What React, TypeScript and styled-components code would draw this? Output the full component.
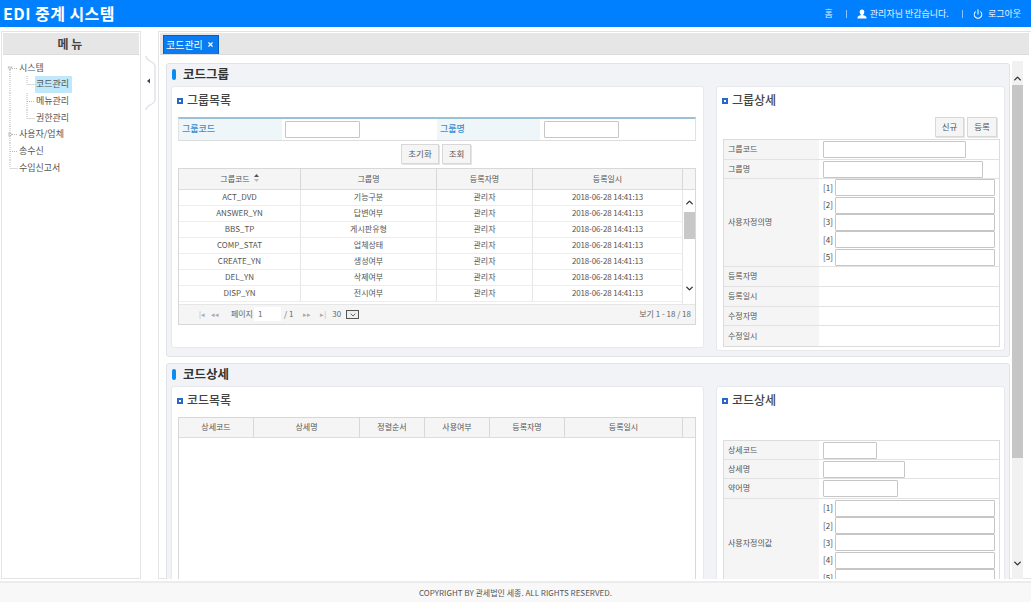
import React from 'react';
import styled, { createGlobalStyle } from 'styled-components';
import { ChevronUp, ChevronDown, Power, X } from 'lucide-react';

const Global = createGlobalStyle`
  html, body { margin: 0; padding: 0; background: #fff; }
  body { font-family: "Noto Sans CJK KR", "Liberation Sans", sans-serif; font-size: 9px; color: #444; }
  * { box-sizing: border-box; }
`;

const Page = styled.div`width: 1031px; height: 602px; display: flex; flex-direction: column; overflow: hidden; background: #fff;`;
const Header = styled.header`height: 27px; flex: none; background: #0080ff; color: #fff; display: flex; align-items: center; justify-content: space-between; padding: 0 10px 0 3px;`;
const Logo = styled.h1`margin: 0; font-size: 16px; font-weight: 700; letter-spacing: 0.45px; line-height: 27px;`;
const TopNav = styled.nav`display: flex; align-items: center; font-size: 9px; color: #e4f1ff;`;
const NavItem = styled.span`display: flex; align-items: center; gap: ${p => p.$gap || 0}px;`;
const NavSep = styled.span`width: 1px; height: 8px; background: #8cc4ff; margin: 0 ${p => p.$r}px 0 ${p => p.$l}px;`;
const Body = styled.div`flex: 1; min-height: 0; display: flex; padding: 4px 0 0 1px;`;
const Sidebar = styled.aside`width: 140px; flex: none; border: 1px solid #e4e4e4; padding: 1px;`;
const MenuTitle = styled.div`height: 22px; background: #e6e6e6; border-bottom: 1px solid #dcdcdc; text-align: center; font-size: 12px; font-weight: 700; line-height: 21px; color: #444; padding-right: 2px;`;
const Tree = styled.div`padding-top: 5px;`;
const TreeRow = styled.div`height: 16.67px; display: flex; align-items: center; font-size: 9px; color: #555;`;
const TreeLines = styled.svg`width: ${p => p.$w}px; height: 17px; flex: none; display: block;`;
const TreeLabel = styled.span`height: 17px; line-height: 16px; padding: 0 1px; background: ${p => p.$on ? '#bfe8fb' : 'transparent'}; border-radius: 1px; ${p => p.$on && 'width: 37px;'}`;
const Splitter = styled.div`width: 17px; flex: none; padding-top: 25px;`;
const Main = styled.main`flex: 1; min-width: 0; display: flex; flex-direction: column; border: 1px solid #e4e4e4; border-right: 0; padding: 1px 2px 0 1px;`;
const TabStrip = styled.div`height: 22px; flex: none; background: #e6e6e6; border-bottom: 1px solid #dcdcdc; padding: 2px 0 0 3px;`;
const Tab = styled.div`width: 56px; height: 19px; background: #0a7bf0; border: 1px solid #0660c4; border-bottom: 0; color: #fff; font-size: 10px; line-height: 15px; display: flex; align-items: center; justify-content: space-between; padding: 0 4px 2px 2px;`;
const ContentRow = styled.div`flex: 1; min-height: 0; display: flex; padding: 7px 0 0 6px;`;
const Sections = styled.div`width: 844px; flex: none; overflow: hidden; display: flex; flex-direction: column; gap: 6px; height: 516px; margin-top: 1px;`;
const Section = styled.section`flex: none; background: #f2f3f7; border: 1px solid #e2e3e8; border-radius: 3px; padding: 0 3px 0 4px; height: ${p => p.$h}px;`;
const SectionHead = styled.h2`margin: 0; height: 22px; padding: 0 0 3px 1px; display: flex; align-items: center; gap: 7px; font-size: 12.5px; font-weight: 700; color: #333;`;
const Pill = styled.i`width: 4px; height: 11px; border-radius: 2px; background: #0a8cf0; display: block; margin-top: 2px;`;
const Cards = styled.div`display: flex; gap: 12px;`;
const Card = styled.div`background: #fff; border: 1px solid #e8e9ec; border-radius: 3px; width: ${p => p.$w}px; height: ${p => p.$h}px; padding: 0 6px;`;
const CardHead = styled.h3`margin: 0; height: 28px; padding-bottom: 3px; display: flex; align-items: center; gap: 4px; font-size: 12px; font-weight: 500; color: #444;`;
const Square = styled.i`width: 6px; height: 6px; border: 2px solid #2868c8; display: block; margin: 2px 0 0 -1px;`;
const SearchBox = styled.div`width: 518px; height: 24px; margin-top: 2px; border-top: 2px solid #9cc1d6; border-bottom: 1px solid #ddd; border-left: 1px solid #e2e2e2; border-right: 1px solid #e2e2e2; display: flex; align-items: stretch;`;
const SearchLabel = styled.div`width: ${p => p.$w}px; background: #eff6fa; color: #3d8ccc; font-weight: 500; display: flex; align-items: center; padding: 0 0 2px 3px;`;
const SearchCell = styled.div`width: ${p => p.$w}px; display: flex; align-items: center; padding-left: ${p => p.$p}px;`;
const Field = styled.input`display: block; width: ${p => p.$w}px; height: 17px; border: 1px solid #c6c6c6; background: #fff; padding: 0; margin: 0; border-radius: 1px;`;
const ButtonRow = styled.div`display: flex; justify-content: ${p => p.$end ? 'flex-end' : 'flex-start'}; gap: 3px; margin-top: ${p => p.$mt}px; padding-left: ${p => p.$l || 0}px; padding-right: ${p => p.$r || 0}px;`;
const Btn = styled.button`width: ${p => p.$w}px; height: 20px; border: 1px solid #d8d8d8; background: #f5f5f5; color: #555; font: inherit; font-size: 8.5px; padding: 0 0 2px; box-shadow: 1px 1px 0 #e4e4e4;`;
const Grid = styled.div`width: 518px; border: 1px solid #d8d8d8; margin-top: ${p => p.$mt}px; height: ${p => p.$h}px; overflow: hidden; display: flex; flex-direction: column;`;
const GridHead = styled.div`height: ${p => p.$h}px; flex: none; display: flex; background: #f5f5f5; border-bottom: 1px solid #dcdcdc;`;
const HeadCell = styled.div`width: ${p => p.$w}px; flex: none; border-right: 1px solid #d8d8d8; display: flex; align-items: center; justify-content: center; gap: 4px; color: #555; font-size: 8px; padding-bottom: 2px; &:last-child { border-right: 0; flex: 1; }`;
const GridBody = styled.div`flex: 1; min-height: 0; display: flex; overflow: hidden;`;
const Rows = styled.div`flex: 1; min-width: 0; overflow: hidden;`;
const Row = styled.div`height: 16px; display: flex; border-bottom: 1px solid #ededed;`;
const Cell = styled.div`width: ${p => p.$w}px; flex: none; border-right: 1px solid #e6e6e6; text-align: center; line-height: 14px; color: #555; font-size: 8px; letter-spacing: ${p => p.$tight ? '-0.15px' : '0'};`;
const MiniScroll = styled.div`width: 13px; flex: none; border-left: 1px solid #e6e6e6; display: flex; flex-direction: column; align-items: center; padding-top: 7px; color: #333;`;
const MiniThumb = styled.div`width: 11px; height: 27px; background: #c8c8c8; margin-top: 4px;`;
const MiniSpacer = styled.div`flex: 1;`;
const MiniDown = styled.div`height: 21px; flex: none;`;
const Pager = styled.div`height: 20px; flex: none; background: #f5f5f5; border-top: 1px solid #e6e6e6; display: flex; align-items: center; padding: 0 4px 2px 20px; color: #666; font-size: 8px;`;
const PagerNav = styled.span`color: #aaa; font-size: 7px; margin: 0 ${p => p.$r}px 0 ${p => p.$l || 0}px;`;
const PagerLabel = styled.span`font-size: 8px; margin-left: 8px;`;
const PagerBox = styled.span`background: #fff; height: 14px; line-height: 14px; padding-left: 4px; width: 27px; margin: 0 3px 0 1px; display: block;`;
const PagerSelect = styled.span`width: 13px; height: 9px; border: 1px solid #555; background: #eee; display: flex; align-items: center; justify-content: center; margin: 2px 0 0 5px;`;
const PagerInfo = styled.span`margin-left: auto;`;
const DetailTable = styled.div`width: 277px; border: 1px solid #dcdcdc; margin-top: ${p => p.$mt}px;`;
const DetailRow = styled.div`display: flex; min-height: ${p => p.$h}px; border-bottom: 1px solid #e2e2e2; &:last-child { border-bottom: 0; }`;
const DetailLabel = styled.div`width: 95px; flex: none; background: #f5f5f5; display: flex; align-items: center; padding: 0 0 2px 4px; color: #555; font-size: 8px;`;
const DetailValue = styled.div`flex: 1; display: flex; flex-direction: column; justify-content: center; padding-left: 4px;`;
const IndexedField = styled.div`display: flex; align-items: center; height: 17.3px; gap: 2px; font-size: 8px; color: #444;`;
const IndexTag = styled.span`width: 10px; padding-bottom: 1px;`;
const PageScroll = styled.div`width: 11px; flex: none; margin: -1px 0 0 2px; height: 518px; background: #f1f1f1; display: flex; flex-direction: column; align-items: center; color: #333; padding-top: 12px;`;
const PageThumb = styled.div`width: 11px; height: 373px; background: #c6c6c6; margin-top: 1px;`;
const PageSpacer = styled.div`flex: 1;`;
const PageArrowDown = styled.div`height: 21px; flex: none;`;
const Footer = styled.footer`height: 21px; flex: none; margin-top: 2px; border-top: 2px solid #ececec; background: #f8f8f8; text-align: center; font-size: 8px; line-height: 20px; color: #555;`;

const groupCols = [122, 136, 96, 150];
const groupRows: [string, string][] = [
  ['ACT_DVD', '기능구분'], ['ANSWER_YN', '답변여부'], ['BBS_TP', '게시판유형'], ['COMP_STAT', '업체상태'],
  ['CREATE_YN', '생성여부'], ['DEL_YN', '삭제여부'], ['DISP_YN', '전시여부'],
];
const codeHead = [['상세코드', 75], ['상세명', 106], ['정렬순서', 65], ['사용여부', 65], ['등록자명', 75], ['등록일시', 118], ['', 0]] as const;

const Branch = ({ w, d, mark }: { w: number; d: string; mark?: string }) => (
  <TreeLines $w={w} viewBox={`0 0 ${w} 17`}>
    <path d={d} fill="none" stroke="#b9b9b9" strokeWidth="1" strokeDasharray="1 1" />
    {mark && <path d={mark} fill="#fff" stroke="#aaa" strokeWidth="0.8" />}
  </TreeLines>
);
const UserIcon = () => (
  <svg width="10" height="10" viewBox="0 0 10 10"><path fill="#fff" d="M5 0.5a2.3 2.6 0 0 1 2.3 2.6c0 1-.5 1.9-1.1 2.3v.8c1.5.4 3.3 1 3.3 2.2v1H.5v-1c0-1.2 1.8-1.8 3.3-2.2v-.8C3.2 5 2.7 4.1 2.7 3.1A2.3 2.6 0 0 1 5 .5z" /></svg>
);
const SortIcon = () => (
  <svg width="5" height="8" viewBox="0 0 5 8"><path d="M2.5 0L5 3H0z" fill="#555" /><path d="M2.5 8L0 5h5z" fill="#bbb" /></svg>
);
const SplitHandle = () => (
  <svg width="17" height="54" viewBox="0 0 17 54">
    <path d="M5 0c0 6 8 4 9 10v34c-1 6-9 4-9 10" fill="#fff" stroke="#dfe3ea" strokeWidth="1.5" />
    <path d="M6 25l3-2.5v5z" fill="#444" />
  </svg>
);

const App = () => (
  <Page>
    <Global />
    <Header>
      <Logo>EDI 중계 시스템</Logo>
      <TopNav>
        <NavItem>홈</NavItem>
        <NavSep $l={13} $r={10} />
        <NavItem $gap={3}><UserIcon />관리자님 반갑습니다.</NavItem>
        <NavSep $l={13} $r={10} />
        <NavItem $gap={5}><Power size={10} strokeWidth={2.5} color="#fff" />로그아웃</NavItem>
      </TopNav>
    </Header>
    <Body>
      <Sidebar>
        <MenuTitle>메 뉴</MenuTitle>
        <Tree>
          <TreeRow><Branch w={15} d="M7 8.5H15M7 8V17" mark="M5 7h4l-2 3z" /><TreeLabel>시스템</TreeLabel></TreeRow>
          <TreeRow><Branch w={32} d="M7 0V17M24 0V8.5H32" /><TreeLabel $on>코드관리</TreeLabel></TreeRow>
          <TreeRow><Branch w={32} d="M7 0V17M24 0V17M24 8.5H32" /><TreeLabel>메뉴관리</TreeLabel></TreeRow>
          <TreeRow><Branch w={32} d="M7 0V17M24 0V8.5H32" /><TreeLabel>권한관리</TreeLabel></TreeRow>
          <TreeRow><Branch w={15} d="M7 0V17M7 8.5H15" mark="M6 6.5v4l3-2z" /><TreeLabel>사용자/업체</TreeLabel></TreeRow>
          <TreeRow><Branch w={15} d="M7 0V17M7 8.5H15" /><TreeLabel>송수신</TreeLabel></TreeRow>
          <TreeRow><Branch w={15} d="M7 0V8.5H15" /><TreeLabel>수입신고서</TreeLabel></TreeRow>
        </Tree>
      </Sidebar>
      <Splitter><SplitHandle /></Splitter>
      <Main>
        <TabStrip>
          <Tab>코드관리<X size={7} strokeWidth={4} color="#fff" /></Tab>
        </TabStrip>
        <ContentRow>
          <Sections>
            <Section $h={294}>
              <SectionHead><Pill />코드그룹</SectionHead>
              <Cards>
                <Card $w={533} $h={262}>
                  <CardHead><Square />그룹목록</CardHead>
                  <SearchBox>
                    <SearchLabel $w={103}>그룹코드</SearchLabel>
                    <SearchCell $w={155} $p={3}><Field $w={75} /></SearchCell>
                    <SearchLabel $w={103}>그룹명</SearchLabel>
                    <SearchCell $w={155} $p={4}><Field $w={75} /></SearchCell>
                  </SearchBox>
                  <ButtonRow $l={223} $mt={3}>
                    <Btn $w={38}>초기화</Btn>
                    <Btn $w={29}>조회</Btn>
                  </ButtonRow>
                  <Grid $mt={4} $h={157}>
                    <GridHead $h={21}>
                      <HeadCell $w={122}>그룹코드 <SortIcon /></HeadCell>
                      <HeadCell $w={136}>그룹명</HeadCell>
                      <HeadCell $w={96}>등록자명</HeadCell>
                      <HeadCell $w={150}>등록일시</HeadCell>
                      <HeadCell $w={13} />
                    </GridHead>
                    <GridBody>
                      <Rows>
                        {groupRows.map(([code, name]) => (
                          <Row key={code}>
                            <Cell $w={groupCols[0]}>{code}</Cell>
                            <Cell $w={groupCols[1]}>{name}</Cell>
                            <Cell $w={groupCols[2]}>관리자</Cell>
                            <Cell $w={groupCols[3]} $tight>2018-06-28 14:41:13</Cell>
                          </Row>
                        ))}
                      </Rows>
                      <MiniScroll>
                        <ChevronUp size={11} strokeWidth={3} />
                        <MiniThumb />
                        <MiniSpacer />
                        <MiniDown><ChevronDown size={11} strokeWidth={3} /></MiniDown>
                      </MiniScroll>
                    </GridBody>
                    <Pager>
                      <PagerNav $r={6}>|◂</PagerNav>
                      <PagerNav $r={4}>◂◂</PagerNav>
                      <PagerLabel>페이지</PagerLabel>
                      <PagerBox>1</PagerBox>
                      / 1
                      <PagerNav $l={10} $r={9}>▸▸</PagerNav>
                      <PagerNav $r={6}>▸|</PagerNav>
                      30
                      <PagerSelect><ChevronDown size={8} strokeWidth={3} /></PagerSelect>
                      <PagerInfo>보기 1 - 18 / 18</PagerInfo>
                    </Pager>
                  </Grid>
                </Card>
                <Card $w={289} $h={265}>
                  <CardHead><Square />그룹상세</CardHead>
                  <ButtonRow $end $r={1} $mt={2}>
                    <Btn $w={29}>신규</Btn>
                    <Btn $w={30}>등록</Btn>
                  </ButtonRow>
                  <DetailTable $mt={2}>
                    <DetailRow $h={20}><DetailLabel>그룹코드</DetailLabel><DetailValue><Field $w={143} /></DetailValue></DetailRow>
                    <DetailRow $h={19}><DetailLabel>그룹명</DetailLabel><DetailValue><Field $w={160} /></DetailValue></DetailRow>
                    <DetailRow $h={88}>
                      <DetailLabel>사용자정의명</DetailLabel>
                      <DetailValue>
                        {[1, 2, 3, 4, 5].map(n => <IndexedField key={n}><IndexTag>[{n}]</IndexTag><Field $w={160} /></IndexedField>)}
                      </DetailValue>
                    </DetailRow>
                    <DetailRow $h={20}><DetailLabel>등록자명</DetailLabel><DetailValue /></DetailRow>
                    <DetailRow $h={20}><DetailLabel>등록일시</DetailLabel><DetailValue /></DetailRow>
                    <DetailRow $h={19}><DetailLabel>수정자명</DetailLabel><DetailValue /></DetailRow>
                    <DetailRow $h={20}><DetailLabel>수정일시</DetailLabel><DetailValue /></DetailRow>
                  </DetailTable>
                </Card>
              </Cards>
            </Section>
            <Section $h={300}>
              <SectionHead><Pill />코드상세</SectionHead>
              <Cards>
                <Card $w={533} $h={300}>
                  <CardHead><Square />코드목록</CardHead>
                  <Grid $mt={2} $h={240}>
                    <GridHead $h={20}>
                      {codeHead.map(([t, w], i) => <HeadCell key={i} $w={w}>{t}</HeadCell>)}
                    </GridHead>
                  </Grid>
                </Card>
                <Card $w={289} $h={300}>
                  <CardHead><Square />코드상세</CardHead>
                  <DetailTable $mt={25}>
                    <DetailRow $h={19}><DetailLabel>상세코드</DetailLabel><DetailValue><Field $w={54} /></DetailValue></DetailRow>
                    <DetailRow $h={19}><DetailLabel>상세명</DetailLabel><DetailValue><Field $w={82} /></DetailValue></DetailRow>
                    <DetailRow $h={20}><DetailLabel>약어명</DetailLabel><DetailValue><Field $w={75} /></DetailValue></DetailRow>
                    <DetailRow $h={88}>
                      <DetailLabel>사용자정의값</DetailLabel>
                      <DetailValue>
                        {[1, 2, 3, 4, 5].map(n => <IndexedField key={n}><IndexTag>[{n}]</IndexTag><Field $w={160} /></IndexedField>)}
                      </DetailValue>
                    </DetailRow>
                  </DetailTable>
                </Card>
              </Cards>
            </Section>
          </Sections>
          <PageScroll>
            <ChevronUp size={11} strokeWidth={3} />
            <PageThumb />
            <PageSpacer />
            <PageArrowDown><ChevronDown size={11} strokeWidth={3} /></PageArrowDown>
          </PageScroll>
        </ContentRow>
      </Main>
    </Body>
    <Footer>COPYRIGHT BY 관세법인 세종. ALL RIGHTS RESERVED.</Footer>
  </Page>
);

export default App;
